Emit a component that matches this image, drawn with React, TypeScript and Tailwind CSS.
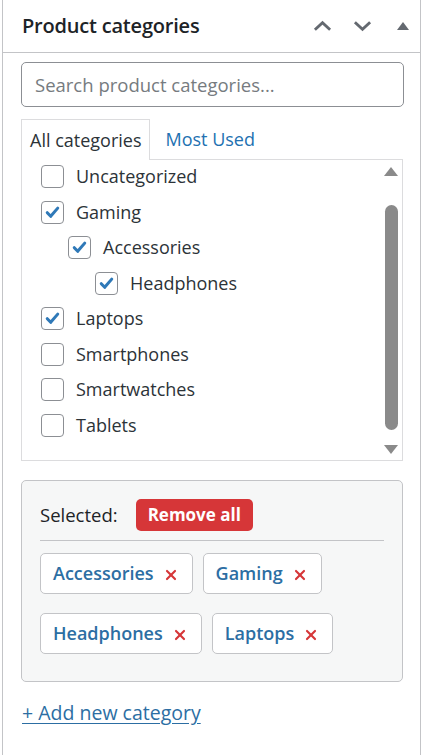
import { X } from "lucide-react";

type Category = {
  name: string;
  level: number;
  checked: boolean;
};

const categories: Category[] = [
  { name: "Uncategorized", level: 0, checked: false },
  { name: "Gaming", level: 0, checked: true },
  { name: "Accessories", level: 1, checked: true },
  { name: "Headphones", level: 2, checked: true },
  { name: "Laptops", level: 0, checked: true },
  { name: "Smartphones", level: 0, checked: false },
  { name: "Smartwatches", level: 0, checked: false },
  { name: "Tablets", level: 0, checked: false },
];

const selected = [
  ["Accessories", "Gaming"],
  ["Headphones", "Laptops"],
];

const indent = ["pl-[19px]", "pl-[46px]", "pl-[73px]"];

function Checkbox({ checked }: { checked: boolean }) {
  return (
    <span className="flex h-[23px] w-[23px] shrink-0 items-center justify-center rounded-[4px] border border-[#8c8f94] bg-white">
      {checked && (
        <svg viewBox="0 0 20 20" className="h-[19px] w-[19px]">
          <path d="M4.5 10.2l3.6 3.8 7.4-8.6" fill="none" stroke="#2f79b8" strokeWidth="3.2" strokeLinecap="round" strokeLinejoin="round" />
        </svg>
      )}
    </span>
  );
}

export default function App() {
  return (
    <div className="h-[755px] w-full bg-white pl-[2px] font-['Open_Sans',sans-serif] text-[#2c3338]">
      <div className="h-full w-[419px] border-x border-[#c3c4c7]">
        <div className="flex h-[53px] items-center justify-between border-b border-[#c3c4c7] pl-[19px] pr-[11px]">
          <h2 className="text-[20px] font-semibold tracking-[-0.2px] text-[#1d2327]">Product categories</h2>
          <div className="flex items-center gap-[21px] text-[#646970]">
            <svg viewBox="0 0 20 12" className="h-[12px] w-[19px]">
              <path d="M2 10l8-7.5 8 7.5" fill="none" stroke="currentColor" strokeWidth="3" />
            </svg>
            <svg viewBox="0 0 20 12" className="h-[12px] w-[19px]">
              <path d="M2 2l8 7.5 8-7.5" fill="none" stroke="currentColor" strokeWidth="3" />
            </svg>
            <svg viewBox="0 0 12 8" className="ml-[4px] h-[8px] w-[12px]">
              <path d="M6 0l6 8H0z" fill="currentColor" />
            </svg>
          </div>
        </div>

        <div className="pl-[18px] pr-[16px]">
          <div className="mt-[9px] flex h-[45px] items-center rounded-[5px] border border-[#8c8f94] px-[13px] text-[18.5px] text-[#767b80]">
            Search product categories...
          </div>

          <div className="mt-[12px] flex items-end">
            <div className="relative z-10 -mb-px flex h-[41px] items-center border border-b-0 border-[#dcdcde] bg-white px-[8px] text-[18px] text-[#2c3338]">
              All categories
            </div>
            <div className="flex h-[40px] items-center pl-[15px] text-[18px] text-[#2271b1]">Most Used</div>
          </div>

          <div className="flex h-[302px] w-[382px] border border-[#dcdcde]">
            <div className="flex-1">
              {categories.map((c) => (
                <label key={c.name} className={`flex h-[35.5px] items-center gap-[12px] pb-[2px] text-[18px] ${indent[c.level]}`}>
                  <Checkbox checked={c.checked} />
                  <span>{c.name}</span>
                </label>
              ))}
            </div>
            <div className="mr-[4px] flex w-[14px] flex-col items-center pt-[7px] pb-[6px] text-[#8a8a8a]">
              <svg viewBox="0 0 14 9" className="h-[9px] w-[14px]">
                <path d="M7 0l7 9H0z" fill="currentColor" />
              </svg>
              <div className="mt-[29px] mb-[2px] w-[13px] flex-1 rounded-full bg-[#8a8a8a]" />
              <svg viewBox="0 0 14 9" className="mt-[13px] h-[9px] w-[14px]">
                <path d="M0 0h14L7 9z" fill="currentColor" />
              </svg>
            </div>
          </div>

          <div className="mt-[19px] w-[382px] rounded-[5px] border border-[#c3c4c7] bg-[#f6f7f7] px-[18px] pt-[18px] pb-[27px]">
            <div className="flex items-center gap-[18px] border-b border-[#c3c4c7] pb-[9px]">
              <span className="text-[18.5px] font-medium text-[#1d2327]">Selected:</span>
              <span className="flex h-[32px] items-center rounded-[5px] bg-[#d63638] px-[12px] text-[17px] font-bold text-white">Remove all</span>
            </div>
            <div className="mt-[12px] flex flex-col gap-[19px]">
              {selected.map((row, i) => (
                <div key={i} className="flex gap-[10px]">
                  {row.map((s) => (
                    <span key={s} className="flex h-[41px] items-center gap-[9px] rounded-[5px] border border-[#c3c4c7] bg-white pl-[12px] pr-[13px] text-[18px] font-semibold text-[#2c6ea3]">
                      {s}
                      <X className="mt-[3px] h-[16px] w-[16px] text-[#d63638]" strokeWidth={3.2} />
                    </span>
                  ))}
                </div>
              ))}
            </div>
          </div>

          <div className="mt-[16px] pl-[1px] text-[19.5px] font-medium text-[#2c6ea3] underline underline-offset-[3px]">+ Add new category</div>
        </div>
      </div>
    </div>
  );
}
